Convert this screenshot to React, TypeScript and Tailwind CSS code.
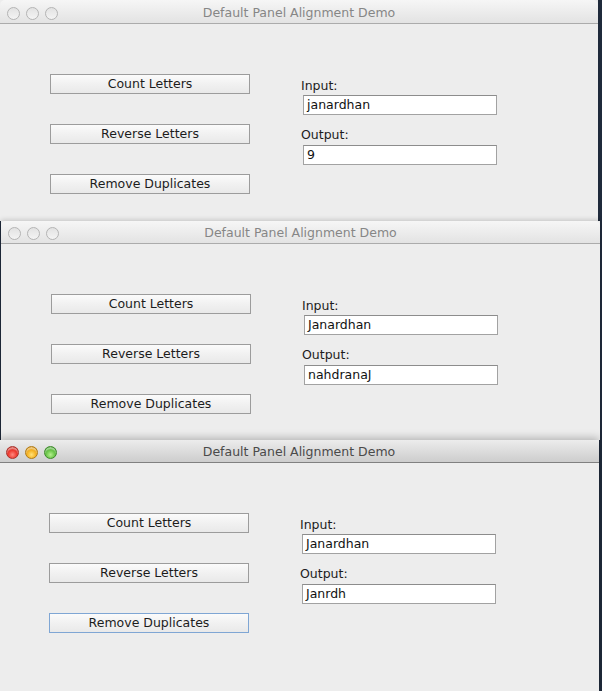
import React from "react";

type WinProps = {
  active?: boolean;
  input: string;
  output: string;
  focused?: boolean;
  className: string;
  titleClass: string;
  bodyClass: string;
};

function Lights({ active }: { active?: boolean }) {
  if (!active) {
    return (
      <div className="flex items-center gap-[6px] pl-[7px]">
        <span className="w-[13px] h-[13px] rounded-full border border-[#b4b4b4] bg-gradient-to-b from-[#e2e2e2] to-[#f4f4f4]" />
        <span className="w-[13px] h-[13px] rounded-full border border-[#b4b4b4] bg-gradient-to-b from-[#e2e2e2] to-[#f4f4f4]" />
        <span className="w-[13px] h-[13px] rounded-full border border-[#b4b4b4] bg-gradient-to-b from-[#e2e2e2] to-[#f4f4f4]" />
      </div>
    );
  }
  return (
    <div className="flex items-center gap-[6px] pl-[7px]">
      <span className="w-[13px] h-[13px] rounded-full border border-[#a8322c] bg-[radial-gradient(circle_at_50%_70%,#ff8a80_0%,#ee3b30_45%,#b8241c_100%)] shadow-[inset_0_2px_1px_rgba(255,255,255,0.45)]" />
      <span className="w-[13px] h-[13px] rounded-full border border-[#b07a14] bg-[radial-gradient(circle_at_50%_70%,#ffe27a_0%,#f5b324_45%,#c98612_100%)] shadow-[inset_0_2px_1px_rgba(255,255,255,0.45)]" />
      <span className="w-[13px] h-[13px] rounded-full border border-[#3d8a2a] bg-[radial-gradient(circle_at_50%_70%,#b4f08e_0%,#6cc64a_45%,#3a962a_100%)] shadow-[inset_0_2px_1px_rgba(255,255,255,0.45)]" />
    </div>
  );
}

function Btn({ label, focused }: { label: string; focused?: boolean }) {
  return (
    <div
      className={`h-[20px] w-[200px] flex items-center justify-center border bg-gradient-to-b from-[#fbfbfb] via-[#f1f1f1] to-[#e9e9e9] text-[#1c1c1c] ${
        focused ? "border-[#7fa6d4]" : "border-[#9c9c9c]"
      }`}
    >
      {label}
    </div>
  );
}

function Field({ value }: { value: string }) {
  return (
    <div className="ml-[2px] h-[20px] w-[194px] flex items-center border border-[#a2a2a2] border-t-[#8c8c8c] bg-white pl-[3px] text-[#111]">
      {value}
    </div>
  );
}

function DemoWindow({ active, input, output, focused, className, titleClass, bodyClass }: WinProps) {
  return (
    <div className={`relative flex flex-col bg-[#ededed] ${className}`}>
      <div
        className={`grid grid-cols-[1fr_auto_1fr] items-center rounded-t-[5px] border-b ${titleClass} ${
          active
            ? "bg-gradient-to-b from-[#ececec] to-[#cdcdcd] border-[#808080]"
            : "bg-gradient-to-b from-[#f6f6f6] to-[#e3e3e3] border-[#ababab]"
        }`}
      >
        <Lights active={active} />
        <div className={`text-[12.5px] ${active ? "text-[#4a4a4a]" : "text-[#868686]"}`}>
          Default Panel Alignment Demo
        </div>
        <div />
      </div>
      <div className={`flex pl-[50px] gap-[51px] text-[12.5px] ${bodyClass}`}>
        <div className="flex flex-col gap-[30px] pt-[50px]">
          <Btn label="Count Letters" />
          <Btn label="Reverse Letters" />
          <Btn label="Remove Duplicates" focused={focused} />
        </div>
        <div className="flex flex-col pt-[54px] text-[#1c1c1c]">
          <div className="leading-[15px] h-[17px]">Input:</div>
          <Field value={input} />
          <div className="leading-[15px] h-[17px] mt-[12px]">Output:</div>
          <div className="mt-[1px]">
            <Field value={output} />
          </div>
        </div>
      </div>
    </div>
  );
}

export default function App() {
  return (
    <div
      className="w-[602px] h-[691px] overflow-hidden bg-[#1f2a3b]"
      style={{ fontFamily: '"DejaVu Sans", "Liberation Sans", sans-serif' }}
    >
      <DemoWindow
        className="w-[598px] z-0"
        titleClass="h-[24px] pt-[3px]"
        bodyClass="h-[197px]"
        input="janardhan"
        output="9"
      />
      <DemoWindow
        className="ml-[1px] w-[599px] z-10 shadow-[0_-1px_5px_rgba(0,0,0,0.18)]"
        titleClass="h-[23px] pt-[2px]"
        bodyClass="h-[196px]"
        input="Janardhan"
        output="nahdranaJ"
      />
      <DemoWindow
        active
        focused
        className="-ml-px w-[600px] z-20 shadow-[0_-2px_8px_rgba(0,0,0,0.25)]"
        titleClass="h-[23px] pt-[2px]"
        bodyClass="h-[228px]"
        input="Janardhan"
        output="Janrdh"
      />
    </div>
  );
}
